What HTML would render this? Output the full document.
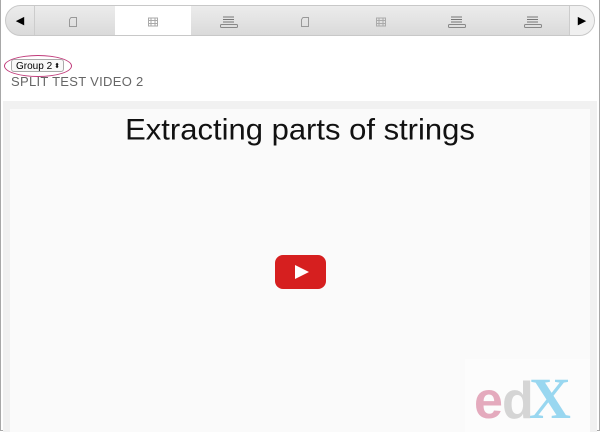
<!DOCTYPE html>
<html><head><style>
body{margin:0;width:600px;height:432px;overflow:hidden;background:#fff;font-family:"Liberation Sans",sans-serif;position:relative}
.frame{position:absolute;left:0;top:0;width:598px;height:430px;border:1px solid #a8a8a8;border-top:none}
.nav{position:absolute;left:5px;top:5px;width:590px;height:31px;border-radius:16px;background:linear-gradient(#ececec,#dadada);border:1px solid #c8c8c8;box-sizing:border-box;overflow:hidden}
.btn{position:absolute;top:0;height:31px;width:28px;font-size:11px;line-height:30px;text-align:center;color:#000}
.tab{position:absolute;top:0;height:31px;width:76px;box-sizing:border-box}
.tab svg{position:absolute;left:50%;top:50%;transform:translate(-50%,-50%)}
.sel{position:absolute;left:11px;top:59px;width:53px;height:13px;border:1px solid #aaa;border-radius:3px;font-size:10px;line-height:13px;padding-left:4px;background:#f8f8f8;box-sizing:border-box}
.oval{position:absolute;left:4px;top:55px;width:68px;height:22px;border:1px solid #c03a7a;border-radius:50%;box-sizing:border-box}
.h{position:absolute;left:11px;top:74px;font-size:13px;color:#666;letter-spacing:0.3px}
.gray{position:absolute;left:3px;top:101px;width:594px;height:331px;background:#f1f1f1}
.inner{position:absolute;left:10px;top:109px;width:580px;height:323px;background:#fafafa}
.title{position:absolute;left:0;width:580px;top:3px;text-align:center;font-size:31px;color:#111;transform:scaleY(0.95)}
.play{position:absolute;left:265px;top:146px;width:51px;height:34px;background:#d61f1f;border-radius:8px}
.play:after{content:"";position:absolute;left:20px;top:10px;border-left:14px solid #fff;border-top:7px solid transparent;border-bottom:7px solid transparent}
</style></head><body>
<div class="frame"></div>
<div class="nav">
<div class="btn" style="left:0">◀</div>
<div class="tab" style="left:28px;border-left:1px solid #ccc"><svg width="8" height="10"><path d="M2 .5h5.5v9h-7v-7z" fill="none" stroke="#999"/></svg></div>
<div class="tab" style="left:109px;background:#fff"><svg width="10" height="9"><rect x=".5" y=".5" width="9" height="8" fill="none" stroke="#aaa"/><path d="M.5 3h9M.5 6h9M3 .5v8M7 .5v8" stroke="#aaa"/></svg></div>
<div class="tab" style="left:185px"><svg width="18" height="12"><path d="M3 1h11M3 3.5h11M3 6h11" stroke="#777"/><rect x=".5" y="8.5" width="17" height="3" rx="1" fill="none" stroke="#888"/></svg></div>
<div class="tab" style="left:261px"><svg width="8" height="10"><path d="M2 .5h5.5v9h-7v-7z" fill="none" stroke="#999"/></svg></div>
<div class="tab" style="left:337px"><svg width="10" height="9"><rect x=".5" y=".5" width="9" height="8" fill="none" stroke="#aaa"/><path d="M.5 3h9M.5 6h9M3 .5v8M7 .5v8" stroke="#aaa"/></svg></div>
<div class="tab" style="left:413px"><svg width="18" height="12"><path d="M3 1h11M3 3.5h11M3 6h11" stroke="#777"/><rect x=".5" y="8.5" width="17" height="3" rx="1" fill="none" stroke="#888"/></svg></div>
<div class="tab" style="left:489px"><svg width="18" height="12"><path d="M3 1h11M3 3.5h11M3 6h11" stroke="#777"/><rect x=".5" y="8.5" width="17" height="3" rx="1" fill="none" stroke="#888"/></svg></div>
<div class="tab" style="left:563px;width:27px;border-left:1px solid #ccc;background:#f0f0f0"></div>
<div class="btn" style="left:562px">▶</div>
</div>
<div class="sel">Group 2 <span style="font-size:7px;float:right;margin-right:3px">⬍</span></div>
<div class="oval"></div>
<div class="h">SPLIT TEST VIDEO 2</div>
<div class="gray"></div>
<div class="inner">
<div class="title">Extracting parts of strings</div>
<div class="play"></div>
<div style="position:absolute;left:455px;top:250px;width:125px;height:73px;background:#fcfcfc"></div>
<svg style="position:absolute;left:464px;top:258px" width="116" height="60">
<text x="0" y="51" font-size="52" font-family="Liberation Sans" font-weight="bold" fill="#e4aabd">e</text>
<text x="28" y="51" font-size="52" font-family="Liberation Sans" font-weight="bold" fill="#cfcfcf" opacity=".85">d</text>
<text x="55" y="51" font-size="58" font-family="Liberation Serif" font-weight="bold" fill="#8fd3ef" opacity=".9">X</text>
</svg>
</div>
</body></html>
